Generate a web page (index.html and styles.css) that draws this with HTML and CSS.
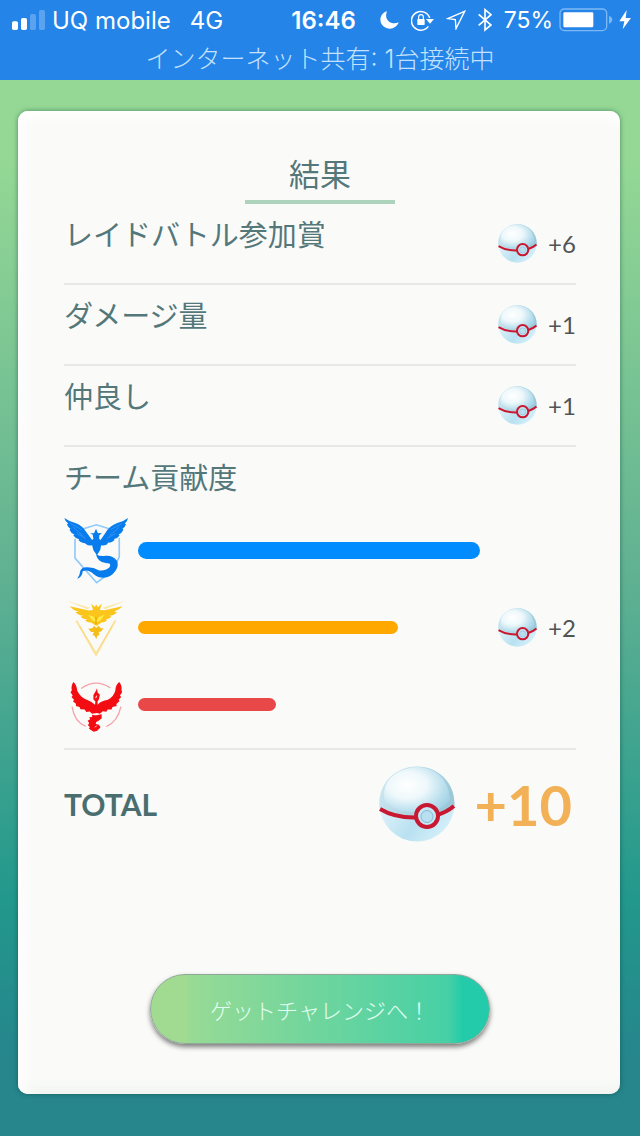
FILE: index.html
```html
<!DOCTYPE html>
<html lang="ja">
    <head>
        <meta charset="UTF-8"/>
        <meta name="viewport" content="width=device-width, initial-scale=1">
        <title>結果</title>
        <link rel="stylesheet" href="styles.css">
    </head>
    <body>
        <svg class="Defs" width="0" height="0" aria-hidden="true">
            <defs>
                <radialGradient id="shell" cx="0.35" cy="0.4" r="0.75">
                    <stop offset="0" stop-color="#ffffff"/>
                    <stop offset="0.4" stop-color="#eef8fb"/>
                    <stop offset="0.8" stop-color="#b3dcec"/>
                    <stop offset="1" stop-color="#9ccfe3"/>
                </radialGradient>
                <linearGradient id="base" x1="0" y1="0.4" x2="0.8" y2="1">
                    <stop offset="0" stop-color="#e9f7fb"/>
                    <stop offset="0.6" stop-color="#b9e1f1"/>
                    <stop offset="1" stop-color="#d5f0fa"/>
                </linearGradient>
                <linearGradient id="rim" x1="0" y1="0" x2="1" y2="0.4">
                    <stop offset="0" stop-color="#d5edf5"/>
                    <stop offset="1" stop-color="#9cc8d8"/>
                </linearGradient>
                <symbol id="ball" viewBox="0 0 76 76">
                    <circle cx="38" cy="38" r="37.5" fill="url(#base)"/>
                    <path d="M.6 42C-2 18 16 .5 38 .5S77 18 75.400 40Q69 46 60 48Q34 56 .6 42Z" fill="url(#rim)"/>
                    <path d="M5 31C4 14 18 2 38 1C58 2 70 14 71 34Q66 41 58 44Q26 51 10 39Q5 36 5 31Z" fill="url(#shell)"/>
                    <path d="M1 43Q16 52 37 51.500M58 49Q68 46 75 40" fill="none" stroke="#c91832" stroke-width="4"/>
                    <circle cx="48" cy="50" r="11" fill="#c5e7f4" stroke="#c91832" stroke-width="4"/>
                    <circle cx="48" cy="50.500" r="6" fill="#b9e0f1" stroke="#86b7d0" stroke-width="1"/>
                </symbol>
            </defs>
        </svg>

        <header class="Status">
            <div class="StatusRow">
                <div class="Carrier">
                    <svg width="33" height="20" viewBox="36 30 99 60" fill="#fff" aria-hidden="true">
                        <rect x="36" y="64" width="18" height="26" rx="5"/>
                        <rect x="63" y="54" width="18" height="36" rx="5"/>
                        <rect x="90" y="42" width="18" height="48" rx="5" opacity=".25"/>
                        <rect x="117" y="30" width="18" height="60" rx="5" opacity=".25"/>
                    </svg>
                    <span>UQ mobile</span>
                    <span class="Network">4G</span>
                </div>
                <time class="Clock">16:46</time>
                <div class="Indicators">
                    <svg width="19" height="18" viewBox="178 35 57 54" fill="#fff" aria-hidden="true">
                        <path d="M199 36C174 43 172 76 197 86C213 92 229 84 234 69C213 79 188 62 199 36Z"/>
                    </svg>
                    <svg width="23" height="22" viewBox="272 27 69 66" fill="none" stroke="#fff" stroke-width="4.500" aria-hidden="true">
                        <path d="M328 54A28 28 0 1 0 324 79"/>
                        <path d="M317 57H341L329 71Z" fill="#fff" stroke="none"/>
                        <rect x="291" y="57" width="22" height="18" rx="2" fill="#fff" stroke="none"/>
                        <path d="M295 58V51Q295 44 302 44T309 51V58" stroke-width="3.500"/>
                    </svg>
                    <svg width="20" height="20" viewBox="379 32 60 60" fill="none" stroke="#fff" stroke-width="4" stroke-linejoin="miter" aria-hidden="true">
                        <path d="M384 58L435 36L409 88L407 61Z"/>
                    </svg>
                    <svg width="14" height="24" viewBox="474 26 42 72" fill="none" stroke="#fff" stroke-width="5" aria-hidden="true">
                        <path d="M476 45L513 77L495 92V31L513 46L476 78"/>
                    </svg>
                    <span class="Percent">75%</span>
                    <svg class="Battery" width="54" height="24" viewBox="719 26 162 72" aria-hidden="true">
                        <rect x="722" y="29" width="140" height="65" rx="13" fill="none" stroke="#7db8f4" stroke-width="4"/>
                        <rect x="732" y="39" width="90" height="45" rx="4" fill="#fff"/>
                        <path d="M869 50Q879 53 879 61T869 73Z" fill="#7db8f4"/>
                    </svg>
                    <svg width="12" height="20" viewBox="895 31 36 60" fill="#fff" aria-hidden="true">
                        <path d="M918 31L896 65H911L906 89L931 55H915Z"/>
                    </svg>
                </div>
            </div>
            <div class="Tethering">インターネット共有: 1台接続中</div>
        </header>

        <main class="Card">
            <h1>結果</h1>
            <section class="Row">
                <h2>レイドバトル参加賞</h2>
                <div class="Reward"><svg aria-hidden="true"><use href="#ball"/></svg><span>+6</span></div>
            </section>
            <section class="Row">
                <h2>ダメージ量</h2>
                <div class="Reward"><svg aria-hidden="true"><use href="#ball"/></svg><span>+1</span></div>
            </section>
            <section class="Row">
                <h2>仲良し</h2>
                <div class="Reward"><svg aria-hidden="true"><use href="#ball"/></svg><span>+1</span></div>
            </section>
            <section class="Teams">
                <h2>チーム貢献度</h2>
                <div class="Team Mystic">
                    <svg class="Emblem" viewBox="38 31 198 210" aria-hidden="true">
                        <path d="M96 68L138 55L180 68M72 98V158L139 234L178 205M209 95V155L199 174" fill="none" stroke="#8fcafa" stroke-width="5"/>
                        <path d="M39 34Q54 45 75 50Q96 58 108 79L125 102L129 98L127 86L119 81L131 81L137 67L143 81L155 80L147 88L147 99L151 102L166 80Q178 58 203 49Q224 44 236 34Q234 46 226 52L230 53Q226 63 219 67L222 70Q217 81 207 85L210 88Q203 98 193 99L194 103Q184 112 174 110L172 115Q160 121 153 118L150 133L140 149L129 134L125 118Q113 121 106 114L101 111Q92 113 83 103L85 100Q74 98 67 88L70 85Q59 80 55 70L58 67Q50 62 47 53L51 51Q41 44 39 34Z" fill="#087cec"/>
                        <path d="M137 146Q151 154 166 151Q187 148 202 166Q208 181 198 196Q183 218 160 219Q143 219 130 208Q112 191 96 199Q94 218 79 222Q87 213 88 199Q91 185 111 186Q130 186 147 196Q166 198 178 187Q184 180 178 175Q168 174 155 170Q141 164 137 146Z" fill="#087cec"/>
                        <path d="M66 62L96 88M58 51L93 70M78 82L105 97M209 62L179 88M217 51L182 70M197 82L170 97" fill="none" stroke="#45a1f5" stroke-width="2"/>
                    </svg>
                    <div class="Track"><div class="Bar" style="width:100%"></div></div>
                </div>
                <div class="Team Instinct">
                    <svg class="Emblem" viewBox="38 10 198 210" aria-hidden="true">
                        <path d="M42 29L118 52L111 57ZM232 29L158 52L165 57Z" fill="#fbe7a0"/>
                        <path d="M76 92L137 199L197 92" fill="none" stroke="#fce29b" stroke-width="6"/>
                        <path d="M86 108L137 191L188 108" fill="none" stroke="#f5d067" stroke-width="2"/>
                        <path d="M55 48L115 61L128 59L122 39L133 50L138 42L143 51L155 39L149 59L163 60L219 48Q209 60 193 64L202 66Q192 77 178 77L185 80Q176 89 166 87L172 90Q164 98 154 98L138 109L122 98Q111 99 103 91L111 88Q99 89 89 80L98 77Q83 76 74 66L83 65Q67 61 55 48Z" fill="#fbc51b"/>
                        <path d="M113 73L130 80L138 91L147 80L164 73L152 90L139 98L124 90Z" fill="#ffeb43"/>
                        <path d="M137 82V103" stroke="#e9a500" stroke-width="4"/>
                        <path d="M130 108L138 114L146 108L151 116L160 116L153 126L145 127L148 137L141 139L138 150L133 139L126 137L131 127L122 127L113 117L126 116Z" fill="#f5bd18"/>
                    </svg>
                    <div class="Track"><div class="Bar" style="width:76%"></div></div>
                    <div class="Reward"><svg aria-hidden="true"><use href="#ball"/></svg><span>+2</span></div>
                </div>
                <div class="Team Valor">
                    <svg class="Emblem" viewBox="38 0 198 210" aria-hidden="true">
                        <path d="M91 54Q137 22 181 52M63 110Q70 157 105 171M214 110Q205 155 169 172" fill="none" stroke="#f7a1aa" stroke-width="4"/>
                        <path d="M67 34Q77 42 79 61Q90 84 112 90Q127 96 134 104L135 94L129 87L129 74L137 61L140 53L142 66L149 73L146 87L142 94L142 104Q153 92 174 89Q193 77 197 59Q198 42 209 34Q218 45 216 60L218 65L211 76L215 80L207 89L210 93L200 102L201 108L188 111L185 119L173 119L169 126L158 124L149 132L140 130L125 132L117 125L107 127L102 119L89 118L86 111L75 108L75 101L66 94L69 89L61 80L65 76L58 65L62 61Q59 46 67 34Z" fill="#f30d12"/>
                        <path d="M125 135Q143 139 154 133L155 146L145 154Q134 158 137 164L146 166L151 174L141 185L130 188L121 182L115 178L118 173L112 168L116 161L111 154L119 149L116 143L125 142Z" fill="#f30d12"/>
                        <path d="M139 76L136 84M139 169L134 174" fill="none" stroke="#fff" stroke-width="3"/>
                    </svg>
                    <div class="Track"><div class="Bar" style="width:40.400%"></div></div>
                </div>
            </section>
            <section class="Total">
                <h2>TOTAL</h2>
                <svg aria-hidden="true"><use href="#ball"/></svg>
                <strong>+10</strong>
            </section>
            <button type="button" class="Challenge">ゲットチャレンジへ！</button>
        </main>
    </body>
</html>
```
FILE: styles.css
```css
*
{
    box-sizing:border-box;
}
body
{
    display:flex;
    flex-direction:column;
    min-height:100vh;
    margin:0;
    background:linear-gradient(#95d895 0, #95d895 14%, #5eb092 52%, #22988c 79%, #26868c 93%);
    color:#54777a;
    font-family:Lato, "Noto Sans CJK JP", sans-serif;
}
h1, h2
{
    margin:0;
    font-weight:400;
}
svg
{
    flex:none;
    display:block;
}
.Defs
{
    position:absolute;
}

.Status
{
    height:80px;
    background:#2484e8;
    color:#fff;
    font-family:Inter, "Noto Sans CJK JP", sans-serif;
    font-size:24px;
}
.StatusRow
{
    display:grid;
    grid-template-columns:1fr auto 1fr;
    align-items:center;
    height:40px;
    padding:0 9px 0 12px;
}
.Carrier, .Indicators
{
    display:flex;
    align-items:center;
    white-space:nowrap;
}
.Carrier
{
    gap:7px;
}
.Network
{
    margin-left:12px;
}
.Clock
{
    padding-left:4px;
    font-weight:600;
}
.Indicators
{
    justify-content:flex-end;
    gap:12px;
}
.Percent
{
    font-size:23px;
}
.Battery
{
    margin:0 -6px;
}
.Tethering
{
    color:#c4e2fc;
    font-size:25px;
    font-weight:300;
    line-height:38px;
    text-align:center;
}

.Card
{
    flex:1;
    display:flex;
    flex-direction:column;
    margin:31px 20px 42px 18px;
    padding:40px 44px 50px 46px;
    border-radius:10px;
    background:#fafbf9;
    box-shadow:0 0 5px rgba(0,60,50,.5), inset 0 18px 14px -12px #fff, inset 16px 0 12px -8px #fdfdfd, inset 0 -16px 14px -12px #eff2ed;
}
h1
{
    align-self:center;
    padding:0 44px 2px;
    border-bottom:4px solid #aed3bc;
    font-size:31px;
    line-height:47px;
}
.Row
{
    display:flex;
    justify-content:space-between;
    height:81px;
    border-bottom:2px solid #e6e8e6;
}
h2
{
    padding-top:10px;
    font-size:29px;
    line-height:42px;
}
.Reward
{
    display:flex;
    align-items:center;
    gap:11px;
    width:78px;
    color:#505454;
    font-size:24px;
}
.Reward svg
{
    width:39px;
    height:39px;
}

.Teams
{
    padding-bottom:5px;
    border-bottom:2px solid #e6e8e6;
}
.Teams h2
{
    margin-bottom:13px;
}
.Team
{
    display:grid;
    grid-template-columns:64px 1fr 78px;
    align-items:center;
    height:77px;
}
.Emblem
{
    width:64px;
    height:68px;
}
.Track
{
    margin:0 18px 0 10px;
}
.Bar
{
    height:13px;
    border-radius:9px;
}
.Mystic .Bar
{
    height:17px;
    background:#008cff;
}
.Instinct .Bar
{
    background:#ffa800;
}
.Valor .Bar
{
    background:#e94848;
}

.Total
{
    display:flex;
    align-items:center;
    height:108px;
}
.Total h2
{
    flex:1;
    padding:0;
    color:#4a6e70;
    font-size:30px;
    font-weight:700;
}
.Total svg
{
    width:76px;
    height:76px;
}
.Total strong
{
    margin:0 4px 0 20px;
    color:#f3b157;
    font-size:56px;
    font-weight:700;
}

.Challenge
{
    align-self:center;
    width:340px;
    height:70px;
    margin-top:auto;
    border:1px solid #8fa898;
    border-radius:35px;
    background:linear-gradient(90deg, #a1da91 0, #a1da91 10%, #97da95 12%, #46d0a6 88%, #24cbaa 92%);
    box-shadow:0 3px 5px rgba(0,0,0,.5);
    color:#e0fff0;
    font-family:"Noto Sans CJK JP", sans-serif;
    font-size:22px;
    font-weight:300;
    line-height:32px;
    cursor:pointer;
}
```
